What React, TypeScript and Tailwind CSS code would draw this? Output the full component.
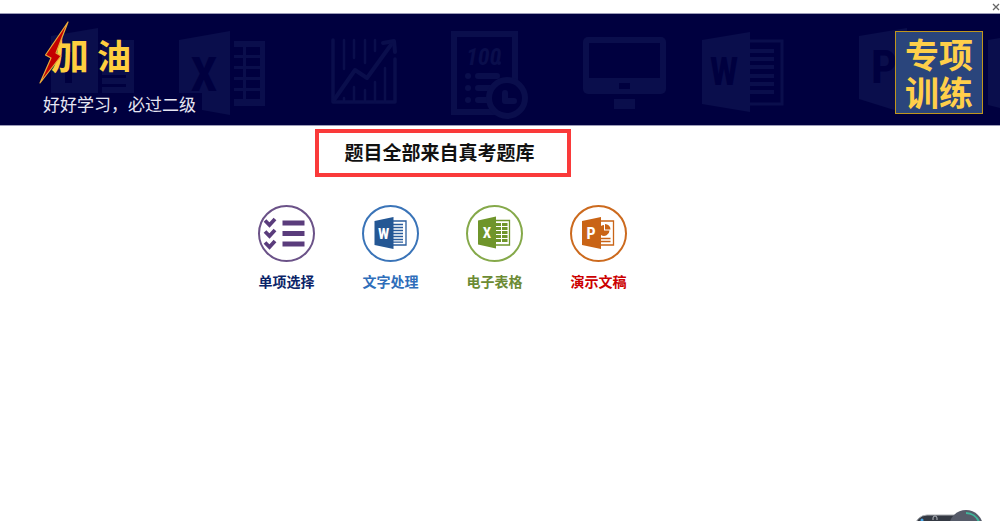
interface Topic {
    id: string;
    label: string;
    ring: string;
    color: string;
    icon: React.ReactNode;
}

const NARROW = '"Liberation Sans Narrow", "Roboto Condensed", "Noto Sans Condensed", "DejaVu Sans Condensed", Roboto, sans-serif';

const ChoiceIcon = () => (
    <svg viewBox="2 2 53 53" className="h-full w-full" fill="none" stroke="#5a3c7c" aria-hidden="true">
        <g strokeWidth="3.8">
            <path d="M7 15.500l4.500 4.500 5.500-6" />
            <path d="M7 26.500l4.500 4.500 5.500-6" />
            <path d="M7 37.500l4.500 4.500 5.500-6" />
        </g>
        <g strokeWidth="5.2">
            <path d="M24.500 18h22M24.500 28.500h22M24.500 39h22" />
        </g>
    </svg>
);

const WordIcon = () => (
    <svg viewBox="2 2 53 53" className="h-full w-full" aria-hidden="true">
        <path d="M30 16h14v24H30" fill="#fff" stroke="#2a5c9c" strokeWidth="1.300" />
        <path d="M31 19.500h10M31 22.500h10M31 25.500h10M31 28.500h10M31 31.500h10M31 34.500h10M31 37.200h10" stroke="#2a5c9c" strokeWidth="1.300" />
        <path d="M12.500 16l19-4v32l-19-4z" fill="#245794" />
        <text x="21.500" y="33.500" textAnchor="middle" fontFamily={NARROW} fontWeight="700" fontSize="15" fill="#fff">W</text>
    </svg>
);

const ExcelIcon = () => (
    <svg viewBox="2 2 53 53" className="h-full w-full" aria-hidden="true">
        <path d="M30 15.500h13.500v24.500H30" fill="#fff" stroke="#6f952b" strokeWidth="1.300" />
        <path d="M30 19.500h5M30 23.500h5M30 27.500h5M30 31.500h5M30 35.500h5M36 19.500h5.500M36 23.500h5.500M36 27.500h5.500M36 31.500h5.500M36 35.500h5.500" stroke="#6f952b" strokeWidth="2.800" />
        <path d="M12 15.500l18-4v32l-18-4z" fill="#6f952b" />
        <text x="21" y="33" textAnchor="middle" fontFamily={NARROW} fontWeight="700" fontSize="15" fill="#fff">X</text>
    </svg>
);

const PowerPointIcon = () => (
    <svg viewBox="2 2 53 53" className="h-full w-full" aria-hidden="true">
        <path d="M30 16h13.500v24H30" fill="#fff" stroke="#c96416" strokeWidth="1.300" />
        <path d="M34 20v5.500h5.500a5.500 5.500 0 0 1-8.500 4.500v-9a5.500 5.500 0 0 1 3-1z" fill="#c96416" />
        <path d="M35 19v5.500h5.500a5.500 5.500 0 0 0-5.500-5.500z" fill="#c96416" />
        <path d="M31 33.500h9.500M31 36.500h9.500" stroke="#c96416" strokeWidth="1.500" />
        <path d="M12 16l19-4v32l-19-4z" fill="#c96416" />
        <text x="21" y="34" textAnchor="middle" fontFamily={NARROW} fontWeight="700" fontSize="16" fill="#fff">P</text>
    </svg>
);

const topics: Topic[] = [
    { id: 'choice', label: '单项选择', ring: 'border-[#6b5288]', color: 'text-[#0b2468]', icon: <ChoiceIcon /> },
    { id: 'word', label: '文字处理', ring: 'border-[#3a74b8]', color: 'text-[#2f6eba]', icon: <WordIcon /> },
    { id: 'excel', label: '电子表格', ring: 'border-[#85a94a]', color: 'text-[#6c8b34]', icon: <ExcelIcon /> },
    { id: 'ppt', label: '演示文稿', ring: 'border-[#cc6a1e]', color: 'text-[#cc0000]', icon: <PowerPointIcon /> },
];

// faint office artwork behind the banner
const BannerArt = () => (
    <svg
        viewBox="0 14 1000 111"
        preserveAspectRatio="xMinYMin slice"
        className="absolute inset-0 h-full w-full"
        fill="#0a0e4c"
        aria-hidden="true"
    >
        {/* presentation */}
        <path d="M51 36l47-8v65H51z" />
        <path d="M102 40h32v53h-32z" />
        <path d="M65 52h7v31h-7zM102 75h24v3h-24zM102 84h24v3h-24z" fill="#00003f" />

        {/* spreadsheet */}
        <path d="M179 40l51-9v84l-28-5v-17h-23z" />
        <path d="M234 41h31v65h-31z" />
        <path d="M234 47h9v8h-9zM246 47h14v8h-14zM234 58h9v8h-9zM246 58h14v8h-14zM234 69h9v8h-9zM246 69h14v8h-14zM234 80h9v8h-9zM246 80h14v8h-14zM234 91h9v8h-9zM246 91h14v8h-14z" fill="#00003f" />
        <text x="204" y="91" textAnchor="middle" fontFamily={NARROW} fontWeight="700" fontSize="48" fill="#00003f">X</text>

        {/* chart */}
        <g fill="none" stroke="#0a0e4c" strokeLinecap="round" strokeLinejoin="round">
            <path d="M333 40v62h62V59" strokeWidth="3.500" />
            <path d="M334 100l21-30 12 8 26-36" strokeWidth="4" />
            <path d="M383 43l11-2 1 11" strokeWidth="4" />
            <path d="M344 40v29M354 40v18M365 40v23M375 40v11M344 98v3M354 87v14M365 90v11M375 82v19M385 68v33" strokeWidth="2.500" />
        </g>

        {/* exam sheet */}
        <rect x="454" y="34" width="61" height="78" fill="none" stroke="#0a0e4c" strokeWidth="6" />
        <text x="466" y="65" fontFamily={NARROW} fontWeight="700" fontStyle="italic" fontSize="24">100</text>
        <circle cx="499" cy="63" r="2" />
        <circle cx="468" cy="76" r="3" />
        <circle cx="468" cy="88" r="3" />
        <circle cx="468" cy="100" r="3" />
        <path d="M478 76h19M478 88h14M478 100h10" stroke="#0a0e4c" strokeWidth="6" strokeLinecap="round" />
        <circle cx="507" cy="98" r="18" fill="#00003f" stroke="#0a0e4c" strokeWidth="6" />
        <path d="M505 93v8h9" fill="none" stroke="#0a0e4c" strokeWidth="6" strokeLinecap="round" strokeLinejoin="round" />

        {/* monitor */}
        <rect x="583" y="37" width="83" height="57" rx="5" />
        <path d="M589 43h71v35h-71zM619 83h11v6h-11z" fill="#00003f" />
        <path d="M614 99h21v10h-21z" />

        {/* document */}
        <path d="M702 40l48-8v80l-48-8z" />
        <path d="M750 41h32v63h-32" fill="none" stroke="#0a0e4c" strokeWidth="3" />
        <path d="M750 51h24M750 59h24M750 67h24M750 76h24M750 84h24M750 92h24" stroke="#0a0e4c" strokeWidth="4" />
        <text x="724" y="85" textAnchor="middle" fontFamily={NARROW} fontWeight="700" fontSize="38" fill="#00003f">W</text>

        <path d="M859 36l48-8v86l-48-15z" />
        <text x="884" y="83" textAnchor="middle" fontFamily={NARROW} fontWeight="700" fontSize="46" fill="#00003f">P</text>
        <path d="M988 40l12-2v70l-12-3z" />
    </svg>
);

const Bolt = () => (
    <svg viewBox="0 0 30 64" className="absolute -left-[4px] top-[7px] h-[64px] w-[30px]" aria-hidden="true">
        <path
            d="M29 1L6.500 34l5.500 3L1 62l21-27-5-3z"
            fill="#c40000"
            stroke="#e8a93a"
            strokeWidth="1.200"
            strokeLinejoin="round"
        />
    </svg>
);

const Banner = () => (
    <header className="relative flex h-[113px] items-start justify-between border-y border-[#9c9cb8] bg-[#00003f] pl-[43px] pr-[17px]">
        <BannerArt />
        <div className="relative pt-[17px]">
            <h1 className="flex items-baseline gap-[8px] pl-[8px] font-bold leading-[44px] text-[#ffcf3f]">
                <span className="text-[38px]">加</span>
                <span className="text-[34px]">油</span>
            </h1>
            <Bolt />
            <p className="mt-[15px] text-[17px] leading-[24px] text-[#e6e6f2]">好好学习，必过二级</p>
        </div>
        <div className="relative mt-[17px] flex h-[83px] w-[88px] items-center justify-center border border-[#c0961c] bg-[#2a457c]">
            <p className="w-[68px] break-all text-[34px] font-bold leading-[38px] text-[#ffcf4a]">专项训练</p>
        </div>
    </header>
);

const FloatingBall = () => (
    <svg viewBox="0 0 76 14" className="absolute bottom-0 right-[12px] h-[14px] w-[76px]" aria-hidden="true">
        <rect x="3" y="8" width="66" height="24" rx="12" fill="#343943" stroke="#a9acb1" strokeWidth="1" />
        <circle cx="10" cy="13" r="1.500" fill="#4aa8e8" />
        <path d="M21 13v-2a2 2 0 0 1 4 0v2" fill="none" stroke="#b4b8be" strokeWidth="1" />
        <circle cx="54" cy="20" r="17" fill="#565b69" />
        <path d="M54 6a14 14 0 0 1 13 9" fill="none" stroke="#3fb59a" strokeWidth="2" />
    </svg>
);

const App = () => {
    return (
        <div className='relative min-h-screen overflow-hidden bg-white font-["Noto_Sans_CJK_SC",sans-serif]'>
            <div className="flex h-[13px] items-center justify-end">
                <button type="button" aria-label="关闭" className="flex h-[13px] w-[8px] items-center text-[#666]">
                    <svg viewBox="0 0 8 8" className="h-[8px] w-[8px]" stroke="currentColor" strokeWidth="1.300" aria-hidden="true">
                        <path d="M1 1l6 6M7 1L1 7" />
                    </svg>
                </button>
            </div>
            <Banner />
            <main className="flex flex-col items-center pr-[115px] pt-[3px]">
                <h2 className="h-[48px] w-[256px] border-4 border-[#fa3a3a] pl-[26px] text-[19px] font-bold leading-[38px] text-[#111]">
                    题目全部来自真考题库
                </h2>
                <div className="mt-[28px] flex gap-[47px]">
                    {topics.map((topic) => (
                        <button key={topic.id} type="button" className="flex w-[57px] flex-col">
                            <span className={`h-[57px] w-[57px] rounded-full border-2 ${topic.ring}`}>
                                {topic.icon}
                            </span>
                            <span className={`mt-[9px] whitespace-nowrap text-[14px] font-bold leading-[20px] ${topic.color}`}>
                                {topic.label}
                            </span>
                        </button>
                    ))}
                </div>
            </main>
            <FloatingBall />
        </div>
    );
};

export default App;
